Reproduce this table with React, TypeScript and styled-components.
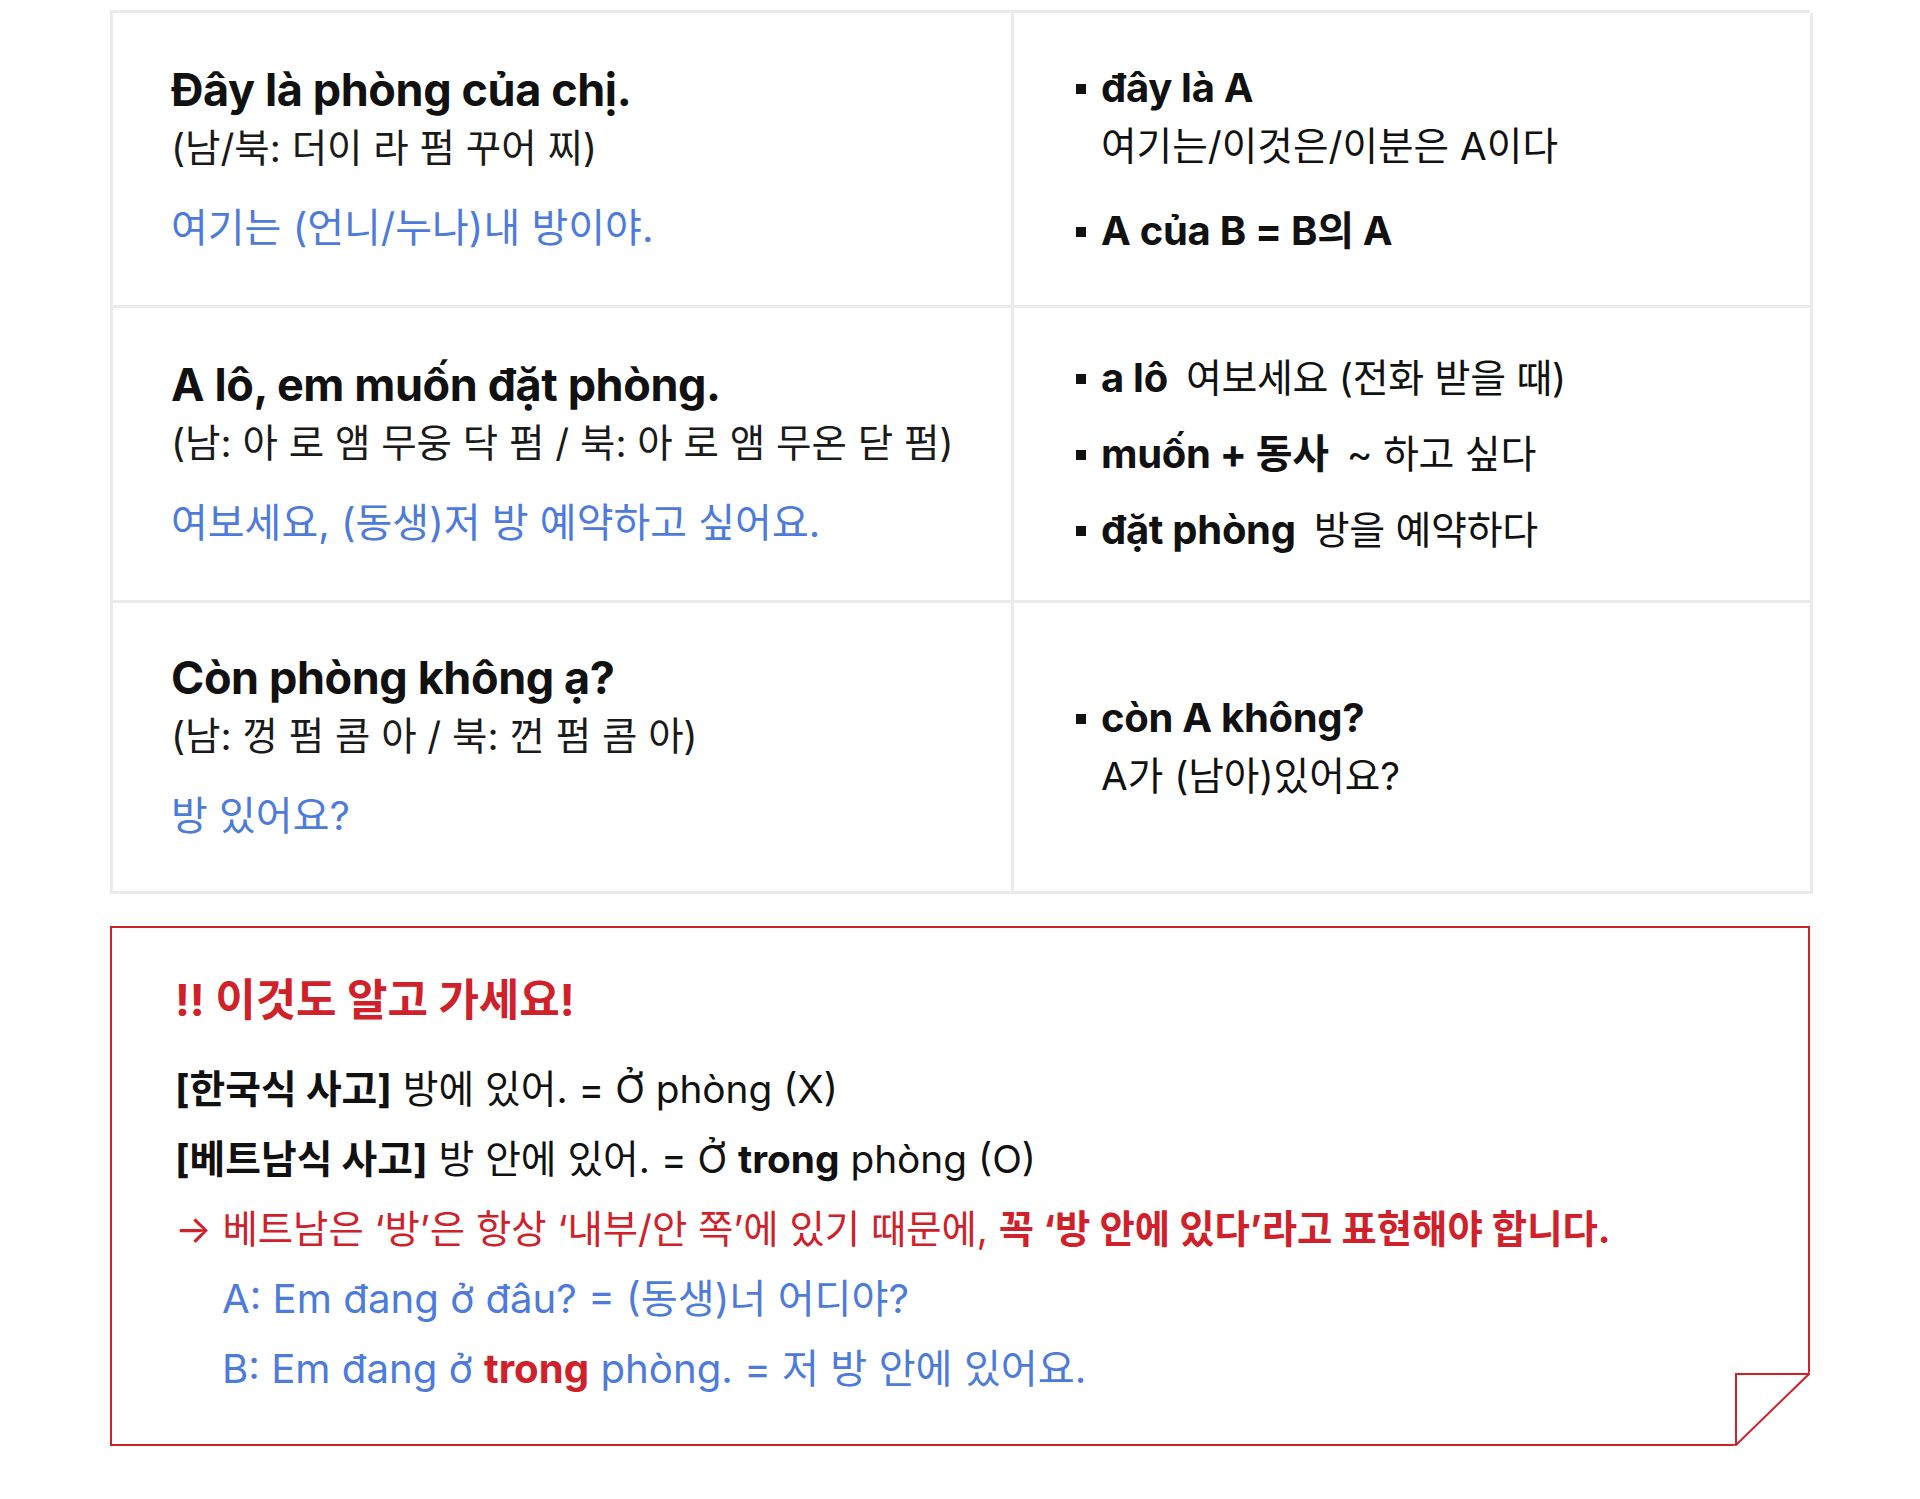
import * as React from "react";
import styled, { createGlobalStyle } from "styled-components";

const GlobalStyle = createGlobalStyle`
  body {
    margin: 0;
    background: #fff;
    font-family: "Inter", "Noto Sans CJK KR", sans-serif;
    color: #111;
  }
`;

const BLUE = "#4d7bdb";
const RED = "#d0202a";

type Row = {
  vi: string;
  pron: string;
  ko: string;
  notes: { bold: string; text?: string; sub?: string }[];
};

const rows: Row[] = [
  {
    vi: "Đây là phòng của chị.",
    pron: "(남/북: 더이 라 펌 꾸어 찌)",
    ko: "여기는 (언니/누나)내 방이야.",
    notes: [
      { bold: "đây là A", sub: "여기는/이것은/이분은 A이다" },
      { bold: "A của B = B의 A" },
    ],
  },
  {
    vi: "A lô, em muốn đặt phòng.",
    pron: "(남: 아 로 앰 무웅 닥 펌 / 북: 아 로 앰 무온 닫 펌)",
    ko: "여보세요, (동생)저 방 예약하고 싶어요.",
    notes: [
      { bold: "a lô", text: "여보세요 (전화 받을 때)" },
      { bold: "muốn + 동사", text: "~ 하고 싶다" },
      { bold: "đặt phòng", text: "방을 예약하다" },
    ],
  },
  {
    vi: "Còn phòng không ạ?",
    pron: "(남: 껑 펌 콤 아 / 북: 껀 펌 콤 아)",
    ko: "방 있어요?",
    notes: [{ bold: "còn A không?", sub: "A가 (남아)있어요?" }],
  },
];

const App: React.FC = () => {
  return (
    <Page>
      <GlobalStyle />
      <Table>
        {rows.map((row, index) => (
          <React.Fragment key={index}>
            <LeftCell $last={index === rows.length - 1}>
              <Heading>{row.vi}</Heading>
              <Pron>{row.pron}</Pron>
              <Trans>{row.ko}</Trans>
            </LeftCell>
            <RightCell $last={index === rows.length - 1}>
              <NoteList $wide={row.notes.some((n) => n.sub)}>
                {row.notes.map((n) => (
                  <NoteItem key={n.bold}>
                    <Bullet />
                    <div>
                      <NoteLine>
                        <b>{n.bold}</b>
                        {n.text ? <Meaning>{n.text}</Meaning> : null}
                      </NoteLine>
                      {n.sub ? <SubLine>{n.sub}</SubLine> : null}
                    </div>
                  </NoteItem>
                ))}
              </NoteList>
            </RightCell>
          </React.Fragment>
        ))}
      </Table>

      <TipBox>
        <TipTitle>!! 이것도 알고 가세요!</TipTitle>
        <TipLine>
          <b>[한국식 사고]</b> 방에 있어. = Ở phòng (X)
        </TipLine>
        <TipLine>
          <b>[베트남식 사고]</b> 방 안에 있어. = Ở <b>trong</b> phòng (O)
        </TipLine>
        <TipLine $color={RED} $small>
          → 베트남은 ‘방’은 항상 ‘내부/안 쪽’에 있기 때문에,{" "}
          <b>꼭 ‘방 안에 있다’라고 표현해야 합니다.</b>
        </TipLine>
        <Example>A: Em đang ở đâu? = (동생)너 어디야?</Example>
        <Example>
          B: Em đang ở <RedBold>trong</RedBold> phòng. = 저 방 안에 있어요.
        </Example>
        <Fold width="76" height="74" viewBox="0 0 76 74">
          <polygon points="76,0 76,74 0,74" fill="#fff" />
          <polygon
            points="2,2 75,2 2,73"
            fill="#fff"
            stroke={RED}
            strokeWidth="2"
            strokeLinejoin="miter"
          />
        </Fold>
      </TipBox>
    </Page>
  );
};

const Page = styled.div({
  width: "1700px",
  padding: "10px 110px 54px",
});

const Table = styled.div({
  display: "grid",
  gridTemplateColumns: "901px 799px",
  borderTop: "3px solid #ebebeb",
  borderLeft: "3px solid #ebebeb",
  boxSizing: "border-box",
});

const LeftCell = styled.div<{ $last: boolean }>`
  display: flex;
  flex-direction: column;
  justify-content: center;
  height: ${(p) => (p.$last ? "288px" : "292px")};
  padding-left: 58px;
  border-right: 3px solid #ebebeb;
  border-bottom: 3px solid #ebebeb;
`;

const RightCell = styled(LeftCell)`
  padding-left: 62px;
`;

const Heading = styled.div({
  fontSize: "45px",
  fontWeight: 700,
  lineHeight: "58px",
  letterSpacing: "-0.4px",
  color: "#111",
});

const Pron = styled.div({
  fontSize: "38.5px",
  lineHeight: "58px",
  color: "#1a1a1a",
});

const Trans = styled.div({
  fontSize: "40px",
  lineHeight: "58px",
  marginTop: "22px",
  color: BLUE,
});

const NoteList = styled.div<{ $wide: boolean }>`
  display: flex;
  flex-direction: column;
  gap: ${(p) => (p.$wide ? "27px" : "18px")};
`;

const NoteItem = styled.div({
  display: "flex",
  alignItems: "flex-start",
});

const Bullet = styled.span({
  width: "10px",
  height: "10px",
  background: "#111",
  marginTop: "25px",
  marginRight: "15px",
  flexShrink: 0,
});

const NoteLine = styled.div({
  fontSize: "39px",
  lineHeight: "58px",
  letterSpacing: "-0.3px",
  b: {
    fontWeight: 700,
    fontSize: "40px",
  },
});

const Meaning = styled.span({
  marginLeft: "18px",
  fontWeight: 400,
});

const SubLine = styled.div({
  fontSize: "38.7px",
  lineHeight: "58px",
});

const TipBox = styled.div({
  position: "relative",
  marginTop: "32px",
  border: `2px solid ${RED}`,
  padding: "44px 60px 40px 63px",
});

const TipTitle = styled.div({
  fontSize: "44px",
  fontWeight: 700,
  lineHeight: "56px",
  color: RED,
  marginBottom: "26px",
});

const TipLine = styled.div<{ $color?: string; $small?: boolean }>`
  font-size: ${(p) => (p.$small ? "38.4px" : "38.8px")};
  line-height: 70px;
  color: ${(p) => p.$color || "#111"};
  b {
    font-weight: 700;
  }
`;

const Example = styled.div({
  fontSize: "40.2px",
  lineHeight: "70px",
  marginLeft: "47px",
  color: BLUE,
});

const RedBold = styled.b({
  color: RED,
  fontWeight: 700,
});

const Fold = styled.svg({
  position: "absolute",
  right: "-2px",
  bottom: "-2px",
  display: "block",
});

export default App;
